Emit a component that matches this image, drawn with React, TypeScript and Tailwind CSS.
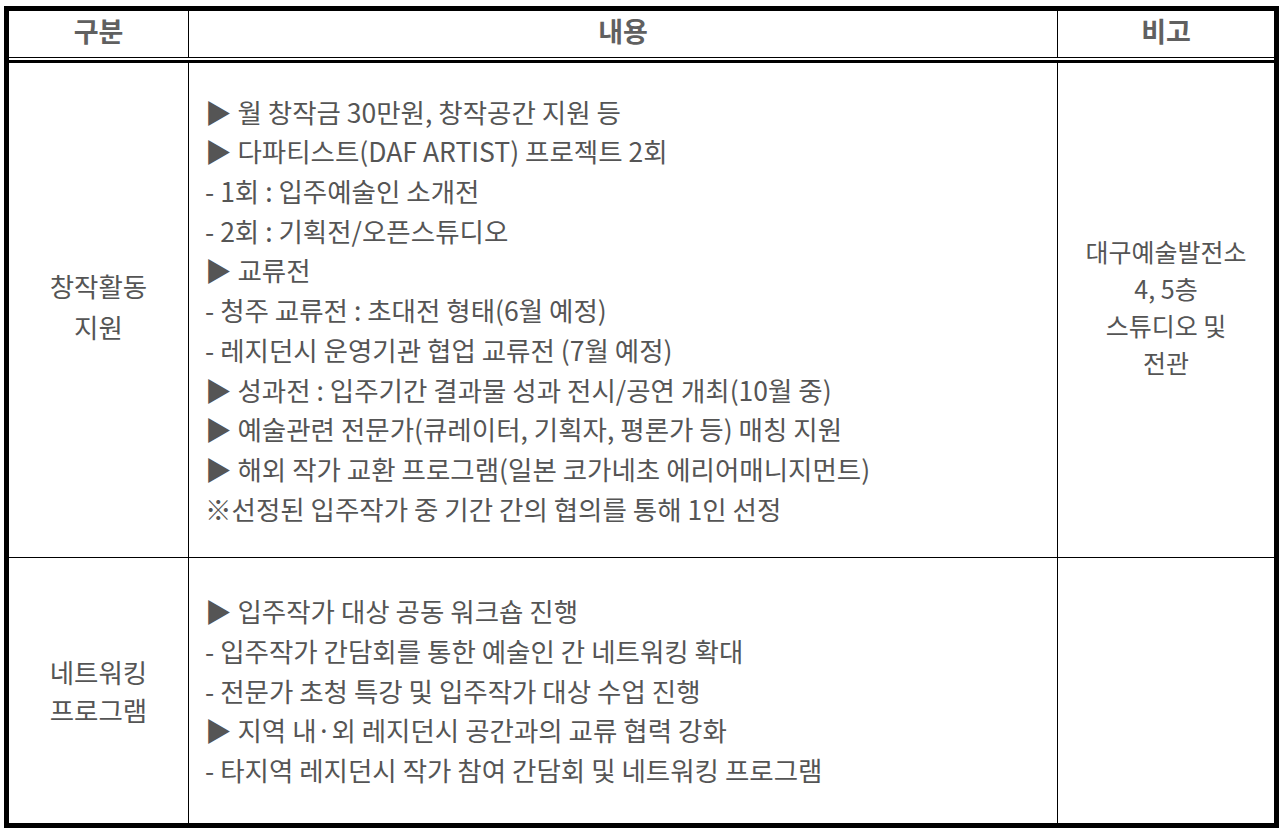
const row1 = [
  "▶ 월 창작금 30만원, 창작공간 지원 등",
  "▶ 다파티스트(DAF ARTIST) 프로젝트 2회",
  "- 1회 : 입주예술인 소개전",
  "- 2회 : 기획전/오픈스튜디오",
  "▶ 교류전",
  "- 청주 교류전 : 초대전 형태(6월 예정)",
  "- 레지던시 운영기관 협업 교류전 (7월 예정)",
  "▶ 성과전 : 입주기간 결과물 성과 전시/공연 개최(10월 중)",
  "▶ 예술관련 전문가(큐레이터, 기획자, 평론가 등) 매칭 지원",
  "▶ 해외 작가 교환 프로그램(일본 코가네초 에리어매니지먼트)",
  "※선정된 입주작가 중 기간 간의 협의를 통해 1인 선정",
]

const row2 = [
  "▶ 입주작가 대상 공동 워크숍 진행",
  "- 입주작가 간담회를 통한 예술인 간 네트워킹 확대",
  "- 전문가 초청 특강 및 입주작가 대상 수업 진행",
  "▶ 지역 내·외 레지던시 공간과의 교류 협력 강화",
  "- 타지역 레지던시 작가 참여 간담회 및 네트워킹 프로그램",
]

const Lines = ({ items }: { items: string[] }) => (
  <div className="flex flex-col">
    {items.map((t, i) => (
      <p key={i} className="leading-[39.7px] whitespace-nowrap">{t}</p>
    ))}
  </div>
)

export default function App() {
  return (
    <div className="w-[1284px] h-[832px] bg-white pt-[6px] pl-[4px] text-[#555] font-['Noto_Sans_CJK_KR','Noto_Sans',sans-serif] text-[26.5px]">
      <div className="w-[1275px] h-[822px] border-[5px] border-black flex flex-col">
        {/* header */}
        <div className="grid grid-cols-[180px_869px_1fr] h-[47px] border-b border-black font-bold text-[27px] text-[#606060]">
          <div className="border-r border-black flex items-center justify-center pb-[5px]">구분</div>
          <div className="border-r border-black flex items-center justify-center pb-[5px]">내용</div>
          <div className="flex items-center justify-center pb-[5px]">비고</div>
        </div>
        <div className="mt-[2px] border-t-[3px] border-black grid grid-cols-[180px_869px_1fr] h-[498px] border-b">
          <div className="border-r border-black flex flex-col items-center justify-center pb-[8px] leading-[41px] text-center">
            <span>창작활동</span>
            <span>지원</span>
          </div>
          <div className="border-r border-black flex items-center pl-4">
            <Lines items={row1} />
          </div>
          <div className="flex flex-col items-center justify-center pb-[6px] text-[25px] leading-[37px] text-center">
            <span>대구예술발전소</span>
            <span>4, 5층</span>
            <span>스튜디오 및</span>
            <span>전관</span>
          </div>
        </div>
        <div className="grid grid-cols-[180px_869px_1fr] flex-1">
          <div className="border-r border-black flex flex-col items-center justify-center leading-[38px] text-center">
            <span>네트워킹</span>
            <span>프로그램</span>
          </div>
          <div className="border-r border-black flex items-center pl-4">
            <Lines items={row2} />
          </div>
          <div />
        </div>
      </div>
    </div>
  )
}
